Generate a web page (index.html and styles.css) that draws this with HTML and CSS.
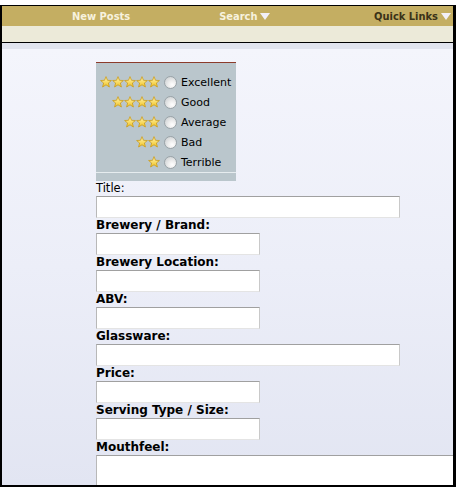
FILE: index.html
```html
<!DOCTYPE html>
<html>
<head>
<meta charset="utf-8">
<link rel="stylesheet" href="styles.css">
</head>
<body>
<div class="frame">
  <div class="navbar">
    <span class="nav nav-new">New Posts</span>
    <span class="nav nav-search">Search <span class="arrow"></span></span>
    <span class="nav nav-quick">Quick Links <span class="arrow"></span></span>
  </div>
  <div class="subbar"></div>
  <div class="band"></div>
  <div class="content">
    <div class="rating">
      <div class="rating-rows">
        <div class="rrow"><span class="stars s5"></span><span class="radio"></span><span class="rlabel">Excellent</span></div>
        <div class="rrow"><span class="stars s4"></span><span class="radio"></span><span class="rlabel">Good</span></div>
        <div class="rrow"><span class="stars s3"></span><span class="radio"></span><span class="rlabel">Average</span></div>
        <div class="rrow"><span class="stars s2"></span><span class="radio"></span><span class="rlabel">Bad</span></div>
        <div class="rrow"><span class="stars s1"></span><span class="radio"></span><span class="rlabel">Terrible</span></div>
      </div>
      <div class="rating-foot"></div>
    </div>
    <div class="field"><div class="label plain">Title:</div><div class="input wide"></div></div>
    <div class="field"><div class="label">Brewery / Brand:</div><div class="input"></div></div>
    <div class="field"><div class="label">Brewery Location:</div><div class="input"></div></div>
    <div class="field"><div class="label">ABV:</div><div class="input"></div></div>
    <div class="field"><div class="label">Glassware:</div><div class="input wide"></div></div>
    <div class="field"><div class="label">Price:</div><div class="input"></div></div>
    <div class="field"><div class="label">Serving Type / Size:</div><div class="input"></div></div>
    <div class="field"><div class="label">Mouthfeel:</div><div class="input area"></div></div>
  </div>
</div>
</body>
</html>
```
FILE: styles.css
```css
html, body { margin: 0; padding: 0; background: #fff; }
body { font-family: "DejaVu Sans", Verdana, sans-serif; font-size: 11px; }
.frame {
  margin-top: 5px;
  height: 482px;
  box-sizing: border-box;
  border: 2px solid #000;
  border-top-width: 1px;
  border-right-width: 3px;
  overflow: hidden;
  display: flex;
  flex-direction: column;
}
.navbar {
  height: 20px;
  background: #c4ae62;
  display: flex;
  align-items: center;
  font-family: "DejaVu Sans Condensed", "DejaVu Sans", sans-serif;
  font-weight: bold;
  font-size: 11px;
  color: #f7f2de;
  flex: none;
}
.nav { display: inline-flex; align-items: center; white-space: nowrap; }
.nav-new { margin-left: 70px; }
.nav-search { margin-left: 89px; }
.nav-quick { margin-left: auto; margin-right: 2px; color: #3a3218; }
.arrow {
  display: inline-block;
  width: 0; height: 0;
  border-left: 5px solid transparent;
  border-right: 5px solid transparent;
  border-top: 7px solid #f2f0f8;
  margin-left: 3px;
  margin-top: 1px;
}
.subbar { height: 16px; background: #ecead9; border-bottom: 1px solid #000; flex: none; }
.band { height: 6px; background: #e1e4ee; flex: none; }
.content {
  flex: 1;
  background: linear-gradient(to bottom, #f4f5fc 0%, #eceef8 50%, #e2e5f2 100%);
  padding: 13px 0 0 94px;
  overflow: hidden;
}
.rating {
  width: 140px;
  background: #bac6cc;
  border-top: 1px solid #8c3b2b;
}
.rating-rows { padding: 9px 0 0 0; }
.rrow {
  height: 20px;
  display: flex;
  align-items: center;
  justify-content: flex-end;
  padding-right: 4px;
}
.stars {
  height: 12px;
  background-image: url("data:image/svg+xml,%3Csvg xmlns='http://www.w3.org/2000/svg' width='12' height='12' viewBox='0 0 12 12'%3E%3Cdefs%3E%3ClinearGradient id='g' x1='0' y1='0' x2='0' y2='1'%3E%3Cstop offset='0' stop-color='%23fff7b8'/%3E%3Cstop offset='1' stop-color='%23f2c21e'/%3E%3C/linearGradient%3E%3C/defs%3E%3Cpolygon points='6,0.6 7.5,4.3 11.4,4.5 8.4,7 9.4,11 6,8.8 2.6,11 3.6,7 0.6,4.5 4.5,4.3' fill='url(%23g)' stroke='%23c99a1a' stroke-width='0.8' stroke-linejoin='round'/%3E%3C/svg%3E");
  background-repeat: repeat-x;
  background-size: 12px 12px;
}
.s5 { width: 60px; }
.s4 { width: 48px; }
.s3 { width: 36px; }
.s2 { width: 24px; }
.s1 { width: 12px; }
.radio {
  width: 11px; height: 11px;
  border-radius: 50%;
  border: 1px solid #9aa3a8;
  background: radial-gradient(circle at 65% 70%, #ffffff 0%, #eeeeee 35%, #c4c9cc 100%);
  margin: 0 4px 0 4px;
  flex: none;
}
.rlabel { width: 51px; color: #000; font-size: 11px; line-height: 13px; }
.rating-foot { height: 8px; border-top: 1px solid #e6ecef; }
.field { display: block; }
.label {
  font-weight: bold;
  font-size: 12px;
  line-height: 15px;
  height: 15px;
  color: #000;
  white-space: nowrap;
}
.label.plain { font-weight: normal; font-size: 11.5px; }
.input {
  width: 164px;
  height: 22px;
  box-sizing: border-box;
  background: #fff;
  border: 1px solid;
  border-color: #a0a0a0 #c9c9c9 #e4e4e4 #b8b8b8;
}
.input.wide { width: 304px; }
.input.area { width: 380px; height: 40px; }
```
